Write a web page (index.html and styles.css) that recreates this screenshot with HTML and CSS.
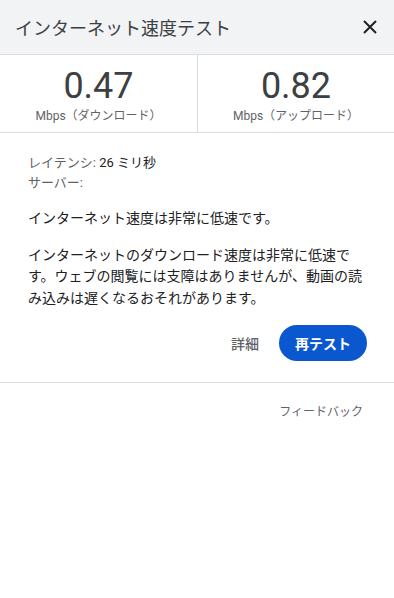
FILE: index.html
```html
<!DOCTYPE html>
<html lang="ja">
<head>
<meta charset="utf-8">
<link rel="stylesheet" href="styles.css">
</head>
<body>
<div class="panel">
  <header class="header">
    <h1 class="title">インターネット速度テスト</h1>
    <button class="close" aria-label="閉じる">
      <svg width="14" height="14" viewBox="0 0 14 14"><path d="M1 1L13 13M13 1L1 13" stroke="#202124" stroke-width="2" fill="none"/></svg>
    </button>
  </header>
  <section class="stats">
    <div class="stat">
      <div class="value">0.47</div>
      <div class="unit">Mbps（ダウンロード）</div>
    </div>
    <div class="stat">
      <div class="value">0.82</div>
      <div class="unit">Mbps（アップロード）</div>
    </div>
  </section>
  <section class="details">
    <div class="meta">
      <div><span class="label">レイテンシ:</span> <span class="val">26 ミリ秒</span></div>
      <div><span class="label">サーバー:</span></div>
    </div>
    <p class="text">インターネット速度は非常に低速です。</p>
    <p class="text">インターネットのダウンロード速度は非常に低速です。ウェブの閲覧には支障はありませんが、動画の読み込みは遅くなるおそれがあります。</p>
    <div class="actions">
      <button class="link">詳細</button>
      <button class="primary">再テスト</button>
    </div>
  </section>
  <footer class="footer">
    <span class="feedback">フィードバック</span>
  </footer>
</div>
</body>
</html>
```
FILE: styles.css
```css
* { box-sizing: border-box; }
html, body { margin: 0; padding: 0; background: #fff; }
body {
  font-family: Roboto, "Noto Sans CJK JP", sans-serif;
  color: #202124;
}
.panel { width: 394px; }
.header {
  height: 55px;
  background: #f1f3f4;
  border-bottom: 1px solid #dadce0;
  display: flex;
  align-items: center;
  justify-content: space-between;
  padding: 0 16px 0 15px;
}
.title {
  margin: 0;
  font-size: 18px;
  font-weight: 400;
  color: #3c4043;
}
.close {
  border: 0;
  background: none;
  padding: 0;
  width: 14px;
  height: 14px;
  display: flex;
  margin-right: 1px;
}
.stats {
  display: grid;
  grid-template-columns: 1fr 1fr;
  border-bottom: 1px solid #dadce0;
  height: 78px;
}
.stat {
  display: flex;
  flex-direction: column;
  align-items: center;
  padding-top: 12px;
}
.stat + .stat { border-left: 1px solid #dadce0; }
.value {
  font-size: 36px;
  line-height: 38px;
  color: #3c4043;
}
.unit {
  font-size: 12px;
  line-height: 16px;
  color: #5f6368;
  margin-top: 3px;
}
.details {
  padding: 20px 27px 21px 28px;
  border-bottom: 1px solid #dadce0;
}
.meta {
  font-size: 13px;
  line-height: 20px;
}
.label { color: #5f6368; }
.val { color: #202124; }
.text {
  margin: 15px 0 0;
  font-size: 14px;
  line-height: 21.5px;
  color: #202124;
}
.actions {
  display: flex;
  justify-content: flex-end;
  align-items: center;
  margin-top: 16px;
  gap: 20px;
}
.link {
  border: 0;
  background: none;
  padding: 0;
  font-family: inherit;
  font-size: 14px;
  font-weight: 500;
  color: #5f6368;
}
.primary {
  border: 0;
  background: #0b57d0;
  color: #fff;
  font-family: inherit;
  font-size: 14px;
  font-weight: 700;
  height: 36px;
  padding: 0 16px;
  border-radius: 18px;
}
.footer {
  display: flex;
  justify-content: flex-end;
  padding: 21px 31px 0 0;
}
.feedback {
  font-size: 12px;
  line-height: 16px;
  color: #5f6368;
}
```
